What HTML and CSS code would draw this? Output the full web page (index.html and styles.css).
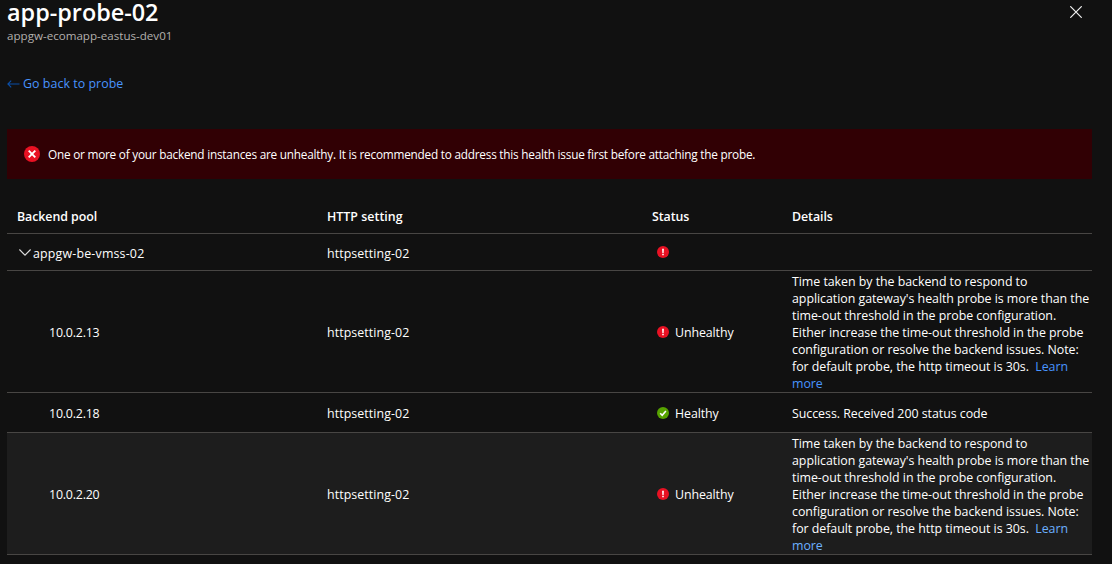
FILE: index.html
```html
<!DOCTYPE html>
<html lang="en">
<head>
<meta charset="utf-8">
<title>app-probe-02</title>
<link rel="stylesheet" href="styles.css">
</head>
<body>
<svg width="0" height="0" class="defs" aria-hidden="true">
  <symbol id="error" viewBox="0 0 12 12"><circle cx="6" cy="6" r="6" fill="#e81123"/><path d="M5.1 2.7h1.8l-.25 4.2h-1.3zM5.2 7.7h1.6v1.5H5.2z" fill="#fff"/></symbol>
  <symbol id="ok" viewBox="0 0 12 12"><circle cx="6" cy="6" r="6" fill="#57a300"/><path d="M3.2 6.2l2 2 3.7-4.3" fill="none" stroke="#fff" stroke-width="1.6"/></symbol>
</svg>
<header class="blade-header">
  <div>
    <h1 class="title">app-probe-02</h1>
    <p class="subtitle">appgw-ecomapp-eastus-dev01</p>
  </div>
  <svg class="close" width="12" height="12" viewBox="0 0 12 12"><path d="M.3.3l11.4 11.4M11.7.3L.3 11.7" stroke="#f2f2f2" stroke-width="1.2"/></svg>
</header>
<a class="back"><svg width="13" height="8" viewBox="0 0 13 8"><path d="M12.5 4H1M4.2.7L.9 4l3.3 3.3" fill="none" stroke="#0b4fa8" stroke-width="1.1"/></svg><span>Go back to probe</span></a>
<section class="banner">
  <svg width="16" height="16" viewBox="0 0 16 16"><circle cx="8" cy="8" r="8" fill="#e81123"/><path d="M4.7 4.7l6.6 6.6M11.3 4.7l-6.6 6.6" stroke="#fff" stroke-width="1.9"/></svg>
  <span>One or more of your backend instances are unhealthy. It is recommended to address this health issue first before attaching the probe.</span>
</section>
<main class="table">
  <div class="row head"><span>Backend pool</span><span class="h-http">HTTP setting</span><span>Status</span><span>Details</span></div>
  <div class="row group">
    <span class="pool"><svg width="12" height="7" viewBox="0 0 12 7"><path d="M.4.5L6 6.1 11.6.5" fill="none" stroke="#ddd" stroke-width="1.1"/></svg><span class="name">appgw-be-vmss-02</span></span>
    <span class="setting">httpsetting-02</span>
    <span class="status"><svg width="12" height="12"><use href="#error"/></svg></span>
    <span></span>
  </div>
  <div class="row tall">
    <span class="ip">10.0.2.13</span><span class="setting">httpsetting-02</span>
    <span class="status"><svg width="12" height="12"><use href="#error"/></svg><span class="label">Unhealthy</span></span>
    <p class="details">Time taken by the backend to respond to<br>application gateway's health probe is more than the<br>time-out threshold in the probe configuration.<br>Either increase the time-out threshold in the probe<br>configuration or resolve the backend issues. Note:<br>for default probe, the http timeout is 30s.&nbsp; <a class="link">Learn<br>more</a></p>
  </div>
  <div class="row short">
    <span class="ip">10.0.2.18</span><span class="setting">httpsetting-02</span>
    <span class="status"><svg width="12" height="12"><use href="#ok"/></svg><span class="label">Healthy</span></span>
    <span class="success">Success. Received 200 status code</span>
  </div>
  <div class="row tall hovered">
    <span class="ip">10.0.2.20</span><span class="setting">httpsetting-02</span>
    <span class="status"><svg width="12" height="12"><use href="#error"/></svg><span class="label">Unhealthy</span></span>
    <p class="details">Time taken by the backend to respond to<br>application gateway's health probe is more than the<br>time-out threshold in the probe configuration.<br>Either increase the time-out threshold in the probe<br>configuration or resolve the backend issues. Note:<br>for default probe, the http timeout is 30s.&nbsp; <a class="link">Learn<br>more</a></p>
  </div>
</main>
</body>
</html>
```
FILE: styles.css
```css
* { box-sizing: border-box; }
body {
  margin: 0;
  padding: 0 20px 0 7px;
  height: 564px;
  background: #111;
  color: #fff;
  font: 12.4px/17px "Open Sans", "Noto Sans", sans-serif;
  white-space: nowrap;
}
svg { display: block; flex: none; }
.defs { display: none; }
h1, p { margin: 0; }
.blade-header { display: flex; justify-content: space-between; height: 74px; }
.title { font-size: 23.4px; line-height: 24px; font-weight: 600; }
.subtitle { color: #b3b0ad; font-size: 11.6px; line-height: 16px; margin-top: 4px; }
.close { margin: 6px 10px 0 0; }
.back { display: flex; align-items: center; gap: 3px; height: 19px; color: #4894fe; letter-spacing: .05px; }
.banner {
  display: flex;
  align-items: center;
  gap: 8px;
  height: 50px;
  margin-top: 36px;
  padding-left: 17px;
  background: #310004;
  font-size: 11.8px;
  letter-spacing: -.23px;
}
.table { margin-top: 21px; }
.row {
  display: grid;
  grid-template-columns: 310px 325px 140px 300px;
  align-items: center;
  padding-left: 10px;
  border-bottom: 1px solid #484644;
}
.head { height: 34px; font-weight: 600; letter-spacing: -.06px; }
.h-http { letter-spacing: .02px; }
.group { height: 37px; }
.tall { height: 122px; }
.short { height: 40px; }
.hovered { background: #1d1d1d; }
.pool { display: flex; align-items: center; gap: 2px; padding-left: 2px; }
.name { padding-top: 2px; letter-spacing: .18px; }
.setting { padding-top: 2px; letter-spacing: .07px; }
.ip { padding: 2px 0 0 32px; letter-spacing: -.2px; }
.status { display: flex; align-items: center; gap: 6px; padding-left: 5px; }
.label { padding-top: 2px; letter-spacing: -.1px; }
.success { padding-top: 2px; letter-spacing: -.04px; }
.details { padding-top: 2px; letter-spacing: -.04px; }
.link { color: #4894fe; }
.hovered .link { color: #6cb0ff; }
```
